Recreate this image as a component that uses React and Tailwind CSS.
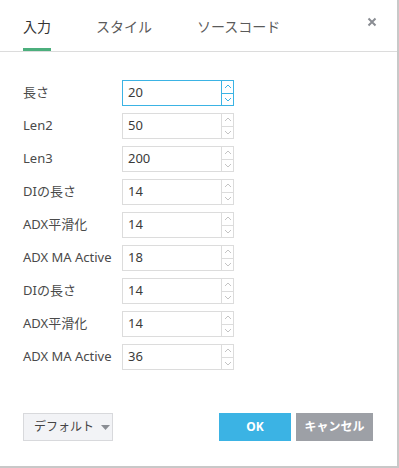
import React from "react";

const rows = [
  { label: "長さ", value: "20", active: true },
  { label: "Len2", value: "50" },
  { label: "Len3", value: "200" },
  { label: "DIの長さ", value: "14" },
  { label: "ADX平滑化", value: "14" },
  { label: "ADX MA Active", value: "18" },
  { label: "DIの長さ", value: "14" },
  { label: "ADX平滑化", value: "14" },
  { label: "ADX MA Active", value: "36" },
];

const Chevron = ({ up, color }) => (
  <svg width="8" height="5" viewBox="0 0 8 5" fill="none">
    <path
      d={up ? "M1 4L4 1L7 4" : "M1 1L4 4L7 1"}
      stroke={color}
      strokeWidth="1"
    />
  </svg>
);

const NumberInput = ({ value, active }) => {
  const border = active ? "border-[#3bb3e4]" : "border-[#dcdcdc]";
  const arrow = active ? "#3bb3e4" : "#c4c4c4";
  return (
    <div className={`flex w-[112px] h-[26px] border ${border} bg-white`}>
      <div className="flex-1 flex items-center pl-[5px] text-[13px] text-[#3a3a3a]">
        {value}
      </div>
      <div className={`w-[12px] flex flex-col border-l ${border}`}>
        <div className={`flex-1 flex items-center justify-center border-b ${border}`}>
          <Chevron up color={arrow} />
        </div>
        <div className="flex-1 flex items-center justify-center">
          <Chevron color={arrow} />
        </div>
      </div>
    </div>
  );
};

const App = () => {
  return (
    <div
      className="w-[399px] h-[468px] bg-white border-r-2 border-b-2 border-[#c8c8c8] flex flex-col"
      style={{ fontFamily: '"Noto Sans", "Noto Sans CJK JP", sans-serif' }}
    >
      <header className="flex items-stretch h-[52px] border-b border-[#dcdcdc] pl-[23px] pr-[20px]">
        <div className="flex flex-col justify-end mr-[45px]">
          <span className="text-[14px] text-[#333] leading-none pb-[14px]">入力</span>
          <div className="h-[3px] bg-[#4caf7d]" />
        </div>
        <div className="flex flex-col justify-end mr-[45px]">
          <span className="text-[14px] text-[#5a5a5a] leading-none pb-[17px]">スタイル</span>
        </div>
        <div className="flex flex-col justify-end">
          <span className="text-[14px] text-[#5a5a5a] leading-none pb-[17px]">ソースコード</span>
        </div>
        <div className="flex-1" />
        <div className="flex items-start pt-[17px]">
          <svg width="10" height="10" viewBox="0 0 10 10">
            <path d="M1.5 1.5L8.5 8.5M8.5 1.5L1.5 8.5" stroke="#8a8d93" strokeWidth="2" />
          </svg>
        </div>
      </header>
      <main className="flex flex-col gap-[7px] pl-[23px] pt-[28px]">
        {rows.map((r, i) => (
          <div key={i} className="flex items-center h-[26px]">
            <span className="w-[99px] text-[13px] text-[#4a4a4a]">{r.label}</span>
            <NumberInput value={r.value} active={r.active} />
          </div>
        ))}
      </main>
      <footer className="flex items-center mt-[43px] pl-[23px] pr-[24px]">
        <button className="flex items-center gap-[7px] h-[28px] w-[90px] pl-[10px] bg-[#f2f3f6] border border-[#d8d9dc] text-[12px] text-[#444]">
          デフォルト
          <svg width="9" height="5" viewBox="0 0 9 5">
            <path d="M0 0H9L4.5 5Z" fill="#8a8d93" />
          </svg>
        </button>
        <div className="flex-1" />
        <button className="h-[28px] w-[72px] bg-[#3bb3e4] text-white text-[12px] font-bold">
          OK
        </button>
        <button className="h-[28px] w-[77px] ml-[5px] bg-[#9da0a6] text-white text-[12px] font-bold">
          キャンセル
        </button>
      </footer>
    </div>
  );
};

export default App;
